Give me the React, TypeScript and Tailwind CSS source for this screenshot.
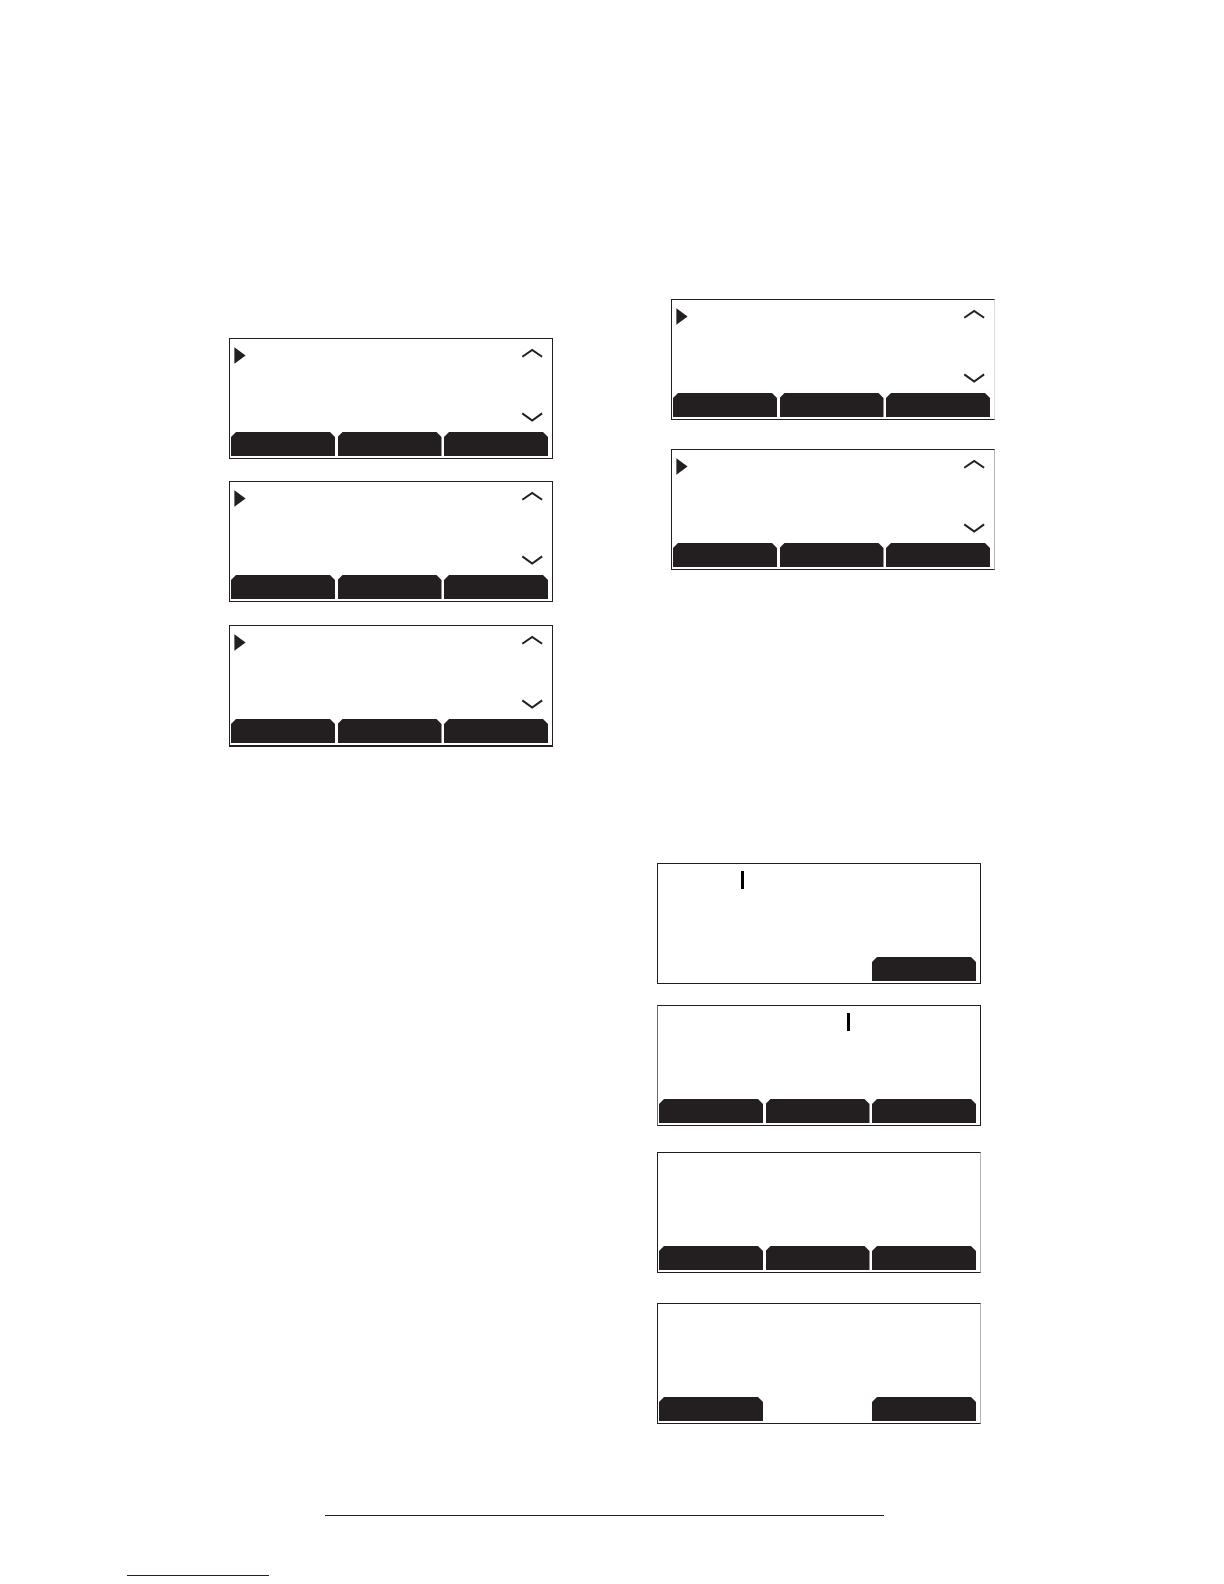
import React from 'react';
import clsx from 'clsx';

interface ScreenProps {
  keys?: boolean[];
  className?: string;
  children?: React.ReactNode;
}

const Screen: React.FC<ScreenProps> = ({ keys = [true, true, true], className, children }) => (
  <section className={clsx('w-full max-w-[324px] border border-[#231f20] bg-white', className)}>
    <div className="flex h-[93px] items-start">{children}</div>
    <div className="flex justify-between pb-[2px] pl-px pr-1">
      {keys.map((visible, i) => (
        <button
          key={i}
          type="button"
          aria-label={`Soft key ${i + 1}`}
          className={clsx(
            'h-6 w-[104px] bg-[#231f20] [clip-path:polygon(0_5px,5px_0,calc(100%-5px)_0,100%_5px,100%_100%,0_100%)]',
            !visible && 'invisible'
          )}
        />
      ))}
    </div>
  </section>
);

const ListBody = () => (
  <div className="flex h-full w-full justify-between pb-[9px] pl-1 pr-[9px] pt-2">
    <svg width="12" height="17" viewBox="0 0 12 17" fill="#231f20">
      <path d="M0.4 0.3 L11.6 8.4 L0.4 16.7 Z" />
    </svg>
    <div className="flex flex-col justify-between">
      <svg width="22" height="12" viewBox="0 0 22 12" fill="none" stroke="#231f20" strokeWidth="2">
        <path d="M1.3 9.8 L11.2 2.9 L21.1 9.8" />
      </svg>
      <svg width="22" height="12" viewBox="0 0 22 12" fill="none" stroke="#231f20" strokeWidth="2">
        <path d="M1.3 2.4 L11.2 9.6 L21.1 2.4" />
      </svg>
    </div>
  </div>
);

const Cursor: React.FC<{ className: string }> = ({ className }) => (
  <span className={clsx('mt-[7px] h-[18px] w-[3px] bg-black', className)} />
);

const App: React.FC = () => {
  return (
    <div className="bg-white pb-2 pt-[299px]">
      <main className="mx-auto flex max-w-[766px] items-start justify-between">
        <div className="mt-[39px] flex w-[324px] flex-col">
          <Screen><ListBody /></Screen>
          <Screen className="mt-[22px]"><ListBody /></Screen>
          <Screen className="mt-[23px] border-b-2"><ListBody /></Screen>
        </div>

        <div className="flex w-[338px] flex-col">
          <Screen className="self-end border-r-[#dddddd]"><ListBody /></Screen>
          <Screen className="mt-[29px] self-end border-r-[#b5b5b5]"><ListBody /></Screen>

          <Screen className="mt-[293px]" keys={[false, false, true]}>
            <Cursor className="ml-[83px]" />
          </Screen>
          <Screen className="mt-[21px] border-l-[#6b696a]">
            <Cursor className="ml-[189px]" />
          </Screen>
          <Screen className="mt-[26px] border-r-[#b5b5b5]" />
          <Screen className="mt-[30px] border-r-[#b5b5b5]" keys={[true, false, true]} />
        </div>
      </main>

      <footer className="mx-auto mt-[91px] max-w-[970px]">
        <div className="ml-[198px] h-px max-w-[559px] bg-[#231f20]" />
        <div className="mt-[59px] h-px max-w-[142px] bg-[#14148c]" />
      </footer>
    </div>
  );
};

export default App;
